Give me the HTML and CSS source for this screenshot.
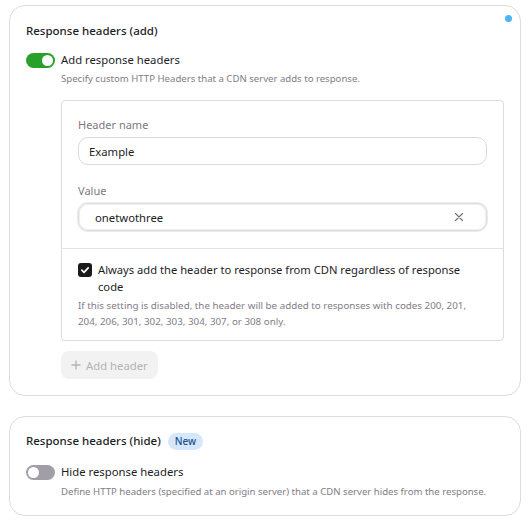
FILE: index.html
```html
<!DOCTYPE html>
<html lang="en">
<head>
    <meta charset="UTF-8">
    <meta name="viewport" content="width=device-width, initial-scale=1.0">
    <title>Response headers</title>
    <link rel="stylesheet" href="styles.css">
</head>
<body>
    <section class="card">
        <span class="status-dot"></span>
        <h3 class="card-title">Response headers (add)</h3>

        <div class="switch-row">
            <span class="switch switch-on"><span class="knob"></span></span>
            <span class="switch-label">Add response headers</span>
        </div>
        <p class="hint">Specify custom HTTP Headers that a CDN server adds to response.</p>

        <div class="header-box">
            <div class="fields">
                <label class="field-label" for="hname">Header name</label>
                <input class="text-input" type="text" id="hname" value="Example">

                <label class="field-label field-gap" for="hvalue">Value</label>
                <div class="input-wrap">
                    <input class="text-input input-focus" type="text" id="hvalue" value="onetwothree">
                    <span class="clear-btn">
                        <svg width="10" height="10" viewBox="0 0 10 10">
                            <path d="M1.5 1.5 L8.5 8.5 M8.5 1.5 L1.5 8.5" stroke="#6f6f6f" stroke-width="1.1" stroke-linecap="round"/>
                        </svg>
                    </span>
                </div>
            </div>

            <div class="always">
                <div class="check-row">
                    <span class="checkbox">
                        <svg width="10" height="10" viewBox="0 0 10 10">
                            <path d="M1.8 5.2 L4 7.3 L8.2 2.8" fill="none" stroke="#fff" stroke-width="1.7" stroke-linecap="round" stroke-linejoin="round"/>
                        </svg>
                    </span>
                    <span class="check-label">Always add the header to response from CDN regardless of response code</span>
                </div>
                <p class="small-hint">If this setting is disabled, the header will be added to responses with codes 200, 201, 204, 206, 301, 302, 303, 304, 307, or 308 only.</p>
            </div>
        </div>

        <button class="btn-add" type="button" disabled>
            <svg width="10" height="10" viewBox="0 0 10 10">
                <path d="M5 0.5 V9.5 M0.5 5 H9.5" stroke="#b3b3b3" stroke-width="1.3"/>
            </svg>
            Add header
        </button>
    </section>

    <section class="card card-second">
        <h3 class="card-title">Response headers (hide) <span class="badge">New</span></h3>

        <div class="switch-row switch-row-second">
            <span class="switch switch-off"><span class="knob"></span></span>
            <span class="switch-label">Hide response headers</span>
        </div>
        <p class="hint hint-second">Define HTTP headers (specified at an origin server) that a CDN server hides from the response.</p>
    </section>
</body>
</html>
```

FILE: styles.css
```css
body {
    margin: 0;
    background: #fff;
    font-family: 'Noto Sans', 'Open Sans', sans-serif;
    color: #1d1d1f;
}

.card {
    position: relative;
    margin: 5px 11px 0 9px;
    padding: 16px 16px 16px 16px;
    border: 1px solid #dcdcdc;
    border-radius: 16px;
}

.card-second {
    margin-top: 20px;
    padding-top: 15px;
    padding-bottom: 15px;
}

.status-dot {
    position: absolute;
    top: 9px;
    right: 8px;
    width: 7px;
    height: 7px;
    border-radius: 50%;
    background: #4cb6f2;
}

.card-title {
    display: flex;
    align-items: center;
    gap: 7px;
    margin: 0;
    font-size: 11.5px;
    font-weight: 500;
    line-height: 18px;
}

.badge {
    display: inline-block;
    height: 17px;
    padding: 0 7px;
    border-radius: 9px;
    background: #d5e7fb;
    color: #1d4f8a;
    font-size: 10px;
    font-weight: 500;
    line-height: 17px;
}

/* toggle switch */
.switch-row {
    display: flex;
    align-items: center;
    gap: 6px;
    margin-top: 12px;
    height: 16px;
}

.switch-row-second {
    margin-top: 14px;
}

.switch {
    position: relative;
    display: inline-block;
    width: 29px;
    height: 15px;
    border-radius: 8px;
}

.switch-on {
    background: #27a12a;
}

.switch-off {
    background: #a29ea8;
}

.switch .knob {
    position: absolute;
    top: 2px;
    width: 11px;
    height: 11px;
    border-radius: 50%;
    background: #fff;
}

.switch-on .knob {
    right: 2px;
}

.switch-off .knob {
    left: 2px;
}

.switch-label {
    font-size: 11.3px;
    line-height: 16px;
}

.hint {
    margin: 3px 0 0 35px;
    font-size: 9.6px;
    line-height: 16px;
    color: #827c88;
}

.hint-second {
    margin-top: 4px;
}

/* header editor box */
.header-box {
    margin: 13px 0 0 35px;
    border: 1px solid #dcdcdc;
    border-radius: 4px;
}

.fields {
    padding: 16px 16px 17px;
    border-bottom: 1px solid #e3e3e3;
}

.field-label {
    display: block;
    margin-bottom: 4px;
    font-size: 11px;
    line-height: 16px;
    color: #7d7882;
}

.field-gap {
    margin-top: 18px;
}

.input-wrap {
    position: relative;
}

.text-input {
    display: block;
    box-sizing: border-box;
    width: 100%;
    height: 28px;
    padding: 0 10px;
    border: 1px solid #d9d9d9;
    border-radius: 10px;
    font-family: inherit;
    font-size: 11.3px;
    color: #1d1d1f;
    outline: none;
}

.input-focus {
    padding-left: 16px;
    border-color: #dedde2;
    box-shadow: 0 0 0 1px #ececf0, inset 0 0 0 1px #f1f1f4;
}

.clear-btn {
    position: absolute;
    top: 9px;
    right: 23px;
    display: flex;
}

.always {
    padding: 12px 16px 10px;
}

.check-row {
    display: flex;
    align-items: flex-start;
    gap: 6px;
}

.checkbox {
    flex: none;
    display: flex;
    align-items: center;
    justify-content: center;
    width: 14px;
    height: 14px;
    margin-top: 2px;
    border-radius: 3px;
    background: #1b1b1b;
}

.check-label {
    font-size: 11.2px;
    line-height: 17px;
}

.small-hint {
    margin: 3px 0 0;
    font-size: 9.8px;
    line-height: 16px;
    color: #827c88;
}

.btn-add {
    display: flex;
    align-items: center;
    gap: 5px;
    height: 28px;
    margin: 10px 0 0 35px;
    padding: 0 10px;
    border: none;
    border-radius: 8px;
    background: #f2f2f2;
    font-family: inherit;
    font-size: 11.3px;
    color: #b3b3b3;
}
```
